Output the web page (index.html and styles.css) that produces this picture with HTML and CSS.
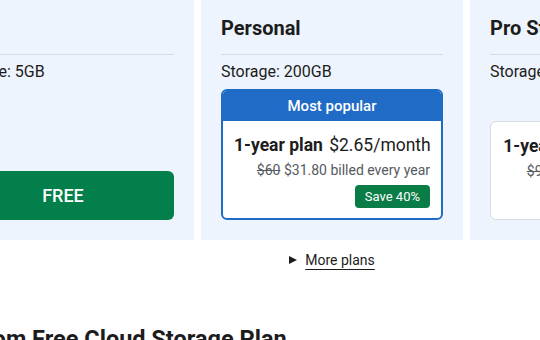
FILE: index.html
```html
<!DOCTYPE html>
<html lang="en">
<head>
<meta charset="utf-8">
<title>Plans</title>
<link rel="stylesheet" href="styles.css">
</head>
<body>
<div class="page">
  <div class="plans">
    <div class="card">
      <h3 class="title">Free</h3>
      <p class="storage">Storage: 5GB</p>
      <div class="bottom">
        <a class="free-btn" href="#">FREE</a>
      </div>
    </div>
    <div class="card">
      <h3 class="title">Personal</h3>
      <p class="storage">Storage: 200GB</p>
      <div class="bottom">
        <div class="offer popular">
          <div class="offer-head">Most popular</div>
          <div class="offer-body">
            <div class="price"><strong>1-year plan</strong> $2.65/month</div>
            <div class="billed"><s>$60</s> $31.80 billed every year</div>
            <span class="save">Save 40%</span>
          </div>
        </div>
      </div>
    </div>
    <div class="card">
      <h3 class="title">Pro Storage</h3>
      <p class="storage">Storage: 2TB</p>
      <div class="bottom">
        <div class="offer">
          <div class="offer-body">
            <div class="price"><strong>1-year plan</strong> $8.25/month</div>
            <div class="billed"><s>$99</s> $99.00 billed every year</div>
            <span class="save">Save 17%</span>
          </div>
        </div>
      </div>
    </div>
  </div>
  <details class="more">
    <summary><span class="more-label">More plans</span></summary>
  </details>
  <h2 class="section">Move from Free Cloud Storage Plan</h2>
</div>
</body>
</html>
```

FILE: styles.css
```css
html, body {
  margin: 0;
  padding: 0;
  background: #ffffff;
  overflow: hidden;
}
body {
  width: 540px;
  height: 340px;
  font-family: Roboto, "Noto Sans", Arial, sans-serif;
  color: #1c1c1c;
}
.page {
  width: 800px;
  margin-left: -68px;
  margin-top: -4px;
}
.plans {
  display: flex;
  gap: 7px;
}
.card {
  width: 262px;
  box-sizing: border-box;
  background: #edf4fd;
  padding: 20px;
  display: flex;
  flex-direction: column;
}
.title {
  margin: 0;
  font-size: 20px;
  line-height: 24px;
  font-weight: 700;
  padding-bottom: 14px;
  border-bottom: 1px solid #d5dce6;
  white-space: nowrap;
}
.storage {
  margin: 7px 0 8px;
  font-size: 16px;
  line-height: 19px;
  white-space: nowrap;
}
.bottom {
  margin-top: auto;
}
.free-btn {
  display: flex;
  align-items: center;
  justify-content: center;
  height: 49px;
  background: #027f4a;
  color: #ffffff;
  border-radius: 6px;
  font-size: 18px;
  font-weight: 500;
  text-decoration: none;
}
.offer {
  border: 1px solid #d8dbe0;
  border-radius: 6px;
  background: #ffffff;
  overflow: hidden;
}
.offer.popular {
  border: 2px solid #1f6bc6;
}
.offer-head {
  background: #1f6bc6;
  color: #ffffff;
  text-align: center;
  font-size: 15px;
  font-weight: 500;
  line-height: 30px;
}
.offer-body {
  padding: 12px 11px 10px;
  text-align: right;
  white-space: nowrap;
}
.price {
  font-size: 17.5px;
  line-height: 24px;
}
.price strong {
  font-weight: 700;
  margin-right: 2px;
}
.billed {
  font-size: 14px;
  line-height: 18px;
  color: #555a60;
  margin-top: 4px;
}
.save {
  display: inline-block;
  margin-top: 6px;
  background: #0a7d47;
  color: #ffffff;
  font-size: 13px;
  line-height: 23px;
  padding: 0 10px;
  border-radius: 4px;
}
.more {
  margin-top: 10px;
  text-align: center;
  font-size: 14px;
}
.more summary {
  display: inline-flex;
  align-items: center;
  gap: 8px;
  cursor: pointer;
  list-style: none;
  line-height: 20px;
}
.more summary::before {
  content: "";
  border-left: 8px solid #1c1c1c;
  border-top: 4.5px solid transparent;
  border-bottom: 4.5px solid transparent;
}
.more summary::-webkit-details-marker {
  display: none;
}
.more-label {
  text-decoration: underline;
  text-underline-offset: 4px;
  text-decoration-thickness: 1px;
}
.section {
  margin: 55px 0 0 -20px;
  font-size: 23.5px;
  font-weight: 700;
  white-space: nowrap;
}
```
